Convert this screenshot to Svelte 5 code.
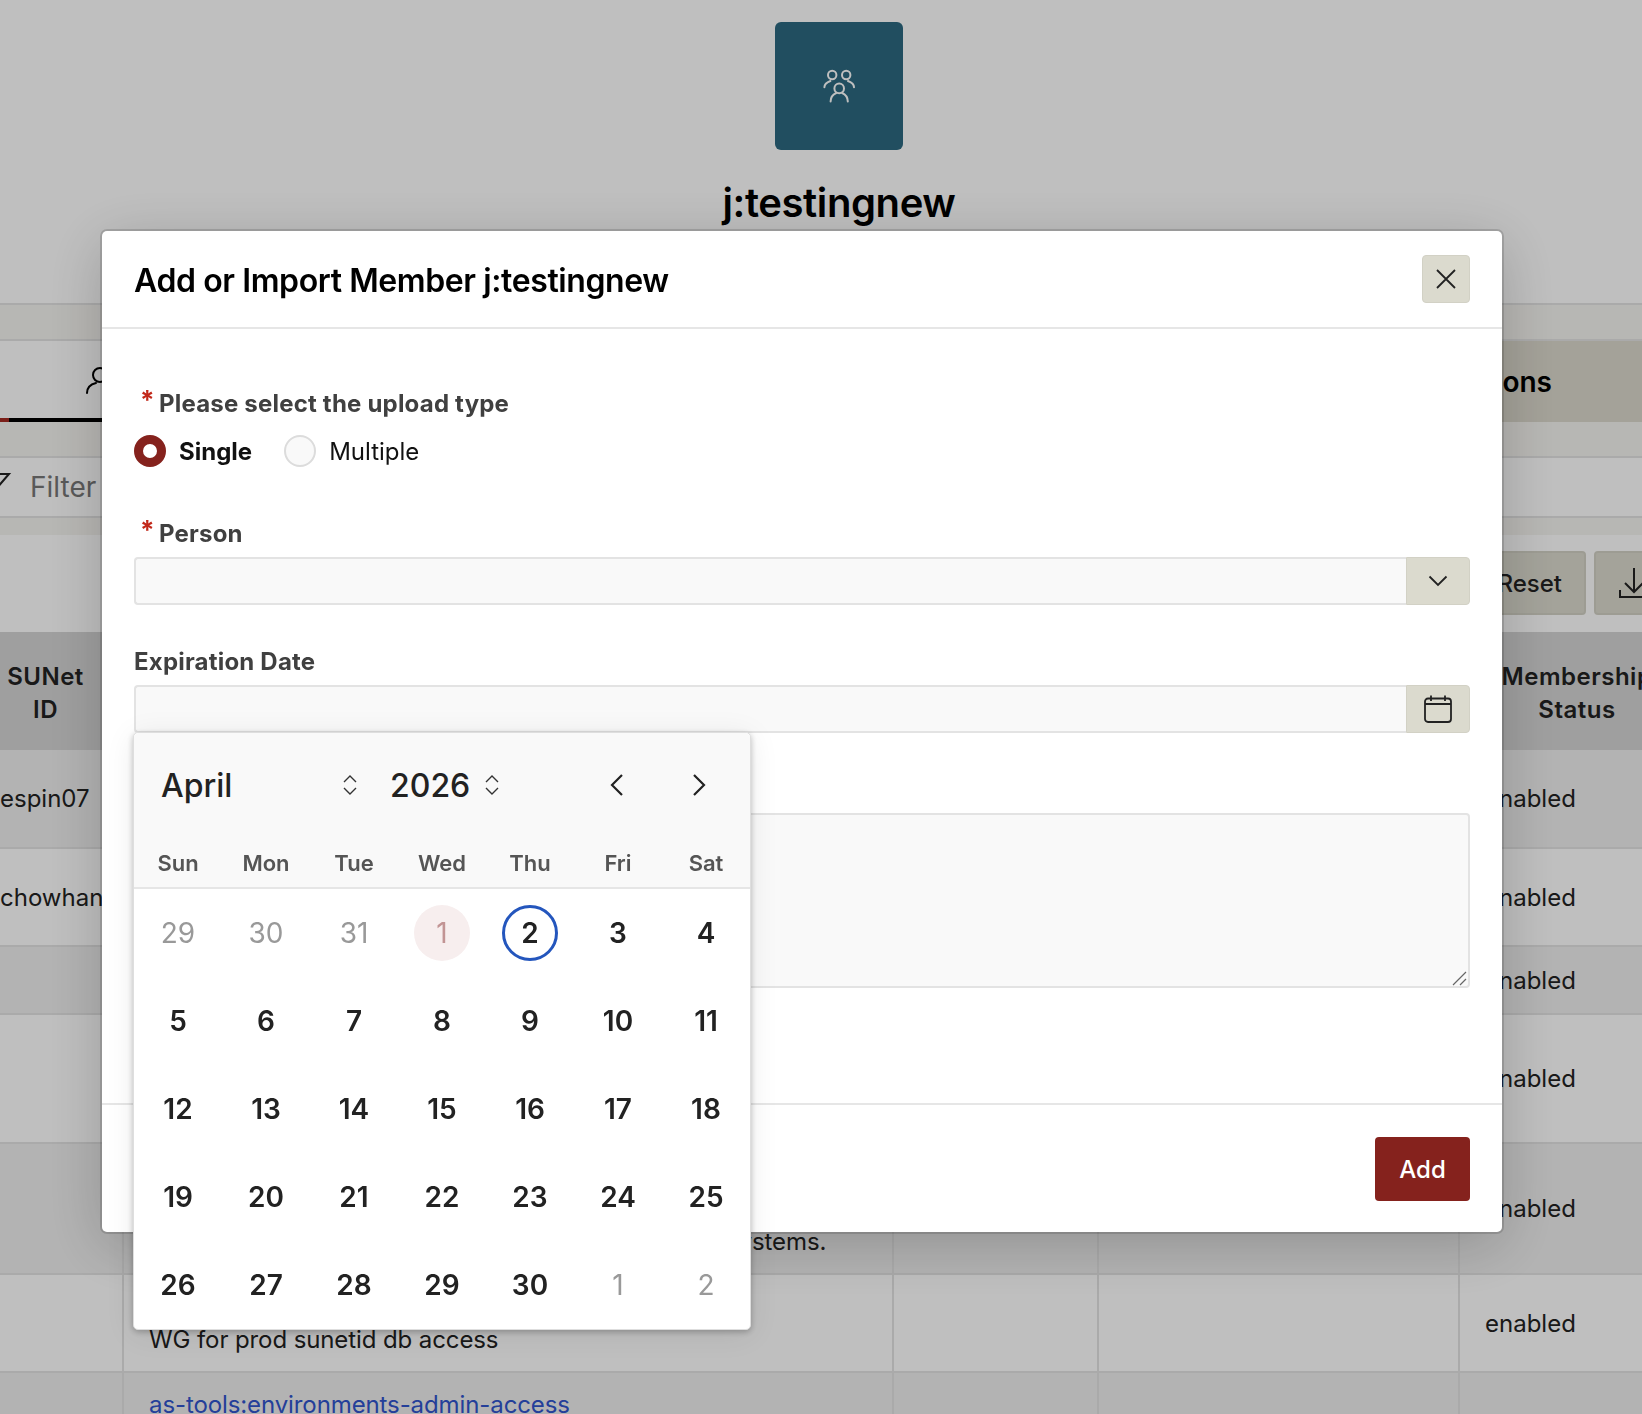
<script>
  const weekdays = ["Sun", "Mon", "Tue", "Wed", "Thu", "Fri", "Sat"];

  // April 2026 grid, with the trailing days of March and leading days of May
  const days = [];
  for (const d of [29, 30, 31]) days.push({ d, out: true });
  for (let d = 1; d <= 30; d++) days.push({ d, out: false });
  for (const d of [1, 2]) days.push({ d, out: true });

  const rows = [
    { h: 98, id: "espin07", lines: [] },
    { h: 98, id: "chowhan", lines: [] },
    { h: 68, id: "", lines: [] },
    { h: 129, id: "", lines: [] },
    { h: 131, id: "", lines: ["as-tools:administrators", "Workgroup for administrators", "Workgroup for administrators with full access to all systems."] },
    { h: 98, id: "", lines: ["as-tools:prod-db-access", "WG for prod sunetid db access"] },
    { h: 131, id: "", lines: ["as-tools:environments-admin-access", "WG for environment admins"] },
  ];
</script>

<div class="page">
  <header class="hero">
    <div class="avatar">
      <svg width="48" height="48" viewBox="0 0 48 48" fill="none" stroke="#fff" stroke-width="2" stroke-linecap="round">
        <circle cx="17.2" cy="13" r="4.2" />
        <circle cx="31.2" cy="13" r="4.2" />
        <circle cx="24.2" cy="26.4" r="4.8" />
        <path d="M9.4 25.2c0-3 2.8-5 6-6.2" />
        <path d="M39 25.2c0-3-2.8-5-6-6.2" />
        <path d="M15.6 39.6c0-4.4 3-7.4 5.6-8.6M32.8 39.6c0-4.4-3-7.4-5.6-8.6" />
      </svg>
    </div>
    <h1>j:testingnew</h1>
  </header>

  <div class="strip tabs-wrap">
    <nav class="tabs">
      <div class="tab active">
        <svg width="30" height="30" viewBox="0 0 30 30" fill="none" stroke="#000" stroke-width="2" stroke-linecap="round">
          <circle cx="15" cy="10" r="7" />
          <path d="M2 28c0-6 5-9 9-10" />
        </svg>
        <span>Members</span>
      </div>
      <div class="tab other"><span>Actions</span></div>
    </nav>
  </div>

  <div class="strip filter-wrap">
    <div class="filter">
      <svg width="24" height="30" viewBox="0 0 24 30" fill="none" stroke="#222" stroke-width="2">
        <path d="M-8 2H21L8 17V29" />
      </svg>
      <span>Filter</span>
    </div>
  </div>

  <div class="toolbar">
    <button class="tool">Reset</button>
    <button class="tool icon" aria-label="Download">
      <svg width="30" height="32" viewBox="0 0 30 32" fill="none" stroke="#222" stroke-width="2">
        <path d="M15 1V24M6 16l9 9 9-9M1 23v7H29" />
      </svg>
    </button>
  </div>

  <table class="grid">
    <colgroup>
      <col style="width:155px" />
      <col style="width:770px" />
      <col style="width:205px" />
      <col style="width:361px" />
      <col style="width:236px" />
    </colgroup>
    <thead>
      <tr>
        <th>SUNet<br />ID</th>
        <th>Group</th>
        <th>Start Date</th>
        <th>End Date</th>
        <th>Membership<br />Status</th>
      </tr>
    </thead>
    <tbody>
      {#each rows as r, i}
        <tr style="height:{r.h}px">
          <td class="sunet">{r.id}</td>
          <td class="group">
            {#each r.lines as line, n}
              <div class:link={n === 0}>{line}</div>
            {/each}
          </td>
          <td></td>
          <td></td>
          <td class="status">enabled</td>
        </tr>
      {/each}
    </tbody>
  </table>
</div>

<div class="backdrop"></div>

<div class="modal">
  <div class="modal-head">
    <h2>Add or Import Member j:testingnew</h2>
    <button class="close" aria-label="Close">
      <svg width="22" height="22" viewBox="0 0 22 22" fill="none" stroke="#222" stroke-width="1.8">
        <path d="M2 2L20 20M20 2L2 20" />
      </svg>
    </button>
  </div>

  <div class="modal-body">
    <div class="field radios-field">
      <div class="label"><span class="req">*</span>Please select the upload type</div>
      <div class="radios">
        <label class="radio on"><input type="radio" name="upload" checked /> Single</label>
        <label class="radio"><input type="radio" name="upload" /> Multiple</label>
      </div>
    </div>

    <div class="field">
      <div class="label"><span class="req">*</span>Person</div>
      <div class="combo">
        <input type="text" />
        <button class="addon" aria-label="Open list">
          <svg width="20" height="12" viewBox="0 0 20 12" fill="none" stroke="#222" stroke-width="1.8">
            <path d="M1.5 1.5L10 10L18.5 1.5" />
          </svg>
        </button>
      </div>
    </div>

    <div class="field date-field">
      <div class="label plain">Expiration Date</div>
      <div class="combo">
        <input type="text" />
        <button class="addon" aria-label="Open calendar">
          <svg width="30" height="30" viewBox="0 0 30 30" fill="none" stroke="#222" stroke-width="1.8">
            <rect x="2" y="4.5" width="26" height="23.5" rx="3" />
            <path d="M2 10H28M8 1.5V7M22 1.5V7" />
          </svg>
        </button>
      </div>

      <div class="calendar">
        <div class="cal-head">
          <div class="cal-top">
            <div class="sel month">
              <span>April</span>
              <svg width="16" height="22" viewBox="0 0 16 22" fill="none" stroke="#333" stroke-width="1.4">
                <path d="M2 8L8 2L14 8M2 14L8 20L14 14" />
              </svg>
            </div>
            <div class="sel year">
              <span>2026</span>
              <svg width="16" height="22" viewBox="0 0 16 22" fill="none" stroke="#333" stroke-width="1.4">
                <path d="M2 8L8 2L14 8M2 14L8 20L14 14" />
              </svg>
            </div>
            <div class="nav">
              <button aria-label="Previous month">
                <svg width="14" height="24" viewBox="0 0 14 24" fill="none" stroke="#222" stroke-width="2.2"><path d="M12 2L2 12L12 22" /></svg>
              </button>
              <button aria-label="Next month">
                <svg width="14" height="24" viewBox="0 0 14 24" fill="none" stroke="#222" stroke-width="2.2"><path d="M2 2L12 12L2 22" /></svg>
              </button>
            </div>
          </div>
          <div class="weekdays">
            {#each weekdays as w}
              <span>{w}</span>
            {/each}
          </div>
        </div>
        <div class="days">
          {#each days as day}
            <div class="day" class:out={day.out}>
              <span class:first={!day.out && day.d === 1} class:today={!day.out && day.d === 2}>{day.d}</span>
            </div>
          {/each}
        </div>
      </div>
    </div>

    <div class="field">
      <div class="label plain">Reason</div>
      <div class="area">
        <textarea></textarea>
        <svg class="grip" width="15" height="15" viewBox="0 0 15 15" fill="none" stroke="#666" stroke-width="1.2">
          <path d="M1 14L14 1M8 14L14 8" />
        </svg>
      </div>
    </div>
  </div>

  <div class="modal-foot">
    <button class="primary">Add</button>
  </div>
</div>

<style>
  :global(html), :global(body) {
    height: 100%;
    overflow: hidden;
  }

  :global(body) {
    font-family: Inter, "Noto Sans", sans-serif;
    color: #222;
    background: #fff;
  }

  button {
    font-family: inherit;
    cursor: pointer;
  }

  .page {
    height: 100vh;
    overflow: hidden;
    background: #fff;
  }

  .hero {
    height: 305px;
    box-sizing: border-box;
    padding: 22px 0 0 36px;
    border-bottom: 2px solid #e3e3e3;
    display: flex;
    flex-direction: column;
    align-items: center;
  }

  .avatar {
    width: 128px;
    height: 128px;
    border-radius: 6px;
    background: #2d6980;
    display: flex;
    align-items: center;
    justify-content: center;
  }

  h1 {
    margin: 29px 0 0;
    font-size: 40px;
    line-height: 48px;
    font-weight: 600;
    color: #000;
    letter-spacing: -0.4px;
  }

  .strip {
    background: #f5f4f0;
  }

  .tabs-wrap {
    padding: 34px 0;
    height: 83px;
  }

  .tabs {
    display: flex;
    height: 83px;
    background: #fff;
    border-top: 2px solid #e3e3e3;
    box-sizing: border-box;
  }

  .tab {
    flex: 1;
    display: flex;
    align-items: center;
    box-sizing: border-box;
  }

  .tab.active {
    padding-left: 85px;
    gap: 12px;
    font-size: 28px;
    border-bottom: 4px solid #000;
    position: relative;
  }

  .tab.active::after {
    content: "";
    position: absolute;
    left: 0;
    bottom: -4px;
    width: 9px;
    height: 4px;
    background: #a32a22;
  }

  .tab.other {
    background: #dbd8cc;
    justify-content: flex-end;
    padding-right: 90px;
    font-size: 28px;
    font-weight: 600;
    color: #000;
  }

  .filter-wrap {
    padding-bottom: 17px;
  }

  .filter {
    height: 62px;
    box-sizing: border-box;
    background: #fff;
    border-top: 2px solid #e3e3e3;
    border-bottom: 2px solid #e3e3e3;
    display: flex;
    align-items: center;
    gap: 18px;
    font-size: 28px;
    color: #777;
  }

  .filter svg {
    margin-left: -12px;
  }

  .toolbar {
    height: 97px;
    box-sizing: border-box;
    display: flex;
    justify-content: flex-end;
    align-items: flex-start;
    gap: 8px;
    padding-top: 16px;
    margin-right: -32px;
  }

  .tool {
    height: 64px;
    padding: 0 22px 0 25px;
    border: 2px solid #d2d1c5;
    border-radius: 4px;
    background: #dbdace;
    font-size: 24px;
    font-weight: 500;
    color: #222;
  }

  .tool.icon {
    width: 80px;
    padding: 0;
    display: flex;
    align-items: center;
    justify-content: center;
  }

  .grid {
    border-collapse: collapse;
    table-layout: fixed;
    width: 1727px;
    margin-left: -33px;
    font-size: 24px;
    line-height: 33px;
    color: #222;
  }

  th {
    height: 115px;
    padding: 3px 0 0;
    background: #d5d5d5;
    font-weight: 600;
    text-align: center;
    letter-spacing: 0.5px;
    color: #222;
  }

  td {
    border: 2px solid #e3e3e3;
    border-top: 0;
    padding: 0;
    vertical-align: middle;
  }

  tbody tr:nth-child(odd) td {
    background: #efefef;
  }

  .sunet {
    padding-left: 31px;
    white-space: nowrap;
  }

  .group {
    padding-left: 25px;
    white-space: nowrap;
    vertical-align: top;
    padding-top: 15px;
    letter-spacing: -0.1px;
  }

  .link {
    color: #3054cd;
  }

  .status {
    padding-left: 25px;
  }

  tbody tr:last-child .status {
    vertical-align: middle;
  }

  .backdrop {
    position: fixed;
    inset: 0;
    background: rgba(0, 0, 0, 0.25);
  }

  .modal {
    position: fixed;
    top: 231px;
    left: 102px;
    width: 1400px;
    background: #fff;
    border-radius: 5px;
    box-shadow: 0 0 0 2px rgba(0, 0, 0, 0.14), 0 12px 60px rgba(0, 0, 0, 0.2);
  }

  .modal-head {
    height: 98px;
    box-sizing: border-box;
    border-bottom: 2px solid #e6e6e6;
    display: flex;
    align-items: center;
    justify-content: space-between;
    padding: 0 32px;
  }

  h2 {
    margin: 2px 0 0;
    font-size: 32px;
    font-weight: 600;
    color: #000;
    letter-spacing: -0.4px;
  }

  .close {
    width: 48px;
    height: 48px;
    padding: 0;
    border: 1px solid #d2d1c5;
    border-radius: 4px;
    background: #dbdace;
    display: flex;
    align-items: center;
    justify-content: center;
  }

  .modal-body {
    padding: 59px 32px 115px;
    display: flex;
    flex-direction: column;
    gap: 42px;
  }

  .field {
    position: relative;
  }

  .label {
    font-size: 24px;
    line-height: 30px;
    font-weight: 700;
    color: #404040;
    margin-bottom: 8px;
    padding-left: 6px;
    letter-spacing: 0.2px;
  }

  .label.plain {
    padding-left: 0;
  }

  .req {
    display: inline-block;
    width: 19px;
    color: #c2281a;
    font-size: 26px;
    font-weight: 700;
    position: relative;
    top: -3px;
  }

  .radios-field .label {
    margin-bottom: 16px;
  }

  .radios-field {
    padding-bottom: 9px;
  }

  .radios {
    display: flex;
    gap: 32px;
    height: 32px;
  }

  .radio {
    display: flex;
    align-items: center;
    gap: 13px;
    font-size: 24px;
    color: #111;
  }

  .radio.on {
    font-weight: 700;
  }

  .radio input {
    appearance: none;
    width: 32px;
    height: 32px;
    margin: 0;
    box-sizing: border-box;
    border-radius: 50%;
    border: 2px solid #dcdcdc;
    background: #f9f9f9;
  }

  .radio input:checked {
    border: 9px solid #85221d;
    background: #fff;
  }

  .combo {
    display: flex;
    height: 48px;
  }

  .combo input {
    flex: 1;
    min-width: 0;
    box-sizing: border-box;
    background: #f9f9f9;
    border: 2px solid #e3e3e3;
    border-right: 0;
    border-radius: 4px 0 0 4px;
    outline: none;
  }

  .addon {
    width: 64px;
    padding: 0;
    border: 1px solid #d2d1c5;
    border-radius: 0 4px 4px 0;
    background: #dbdace;
    display: flex;
    align-items: center;
    justify-content: center;
  }

  .area {
    position: relative;
  }

  textarea {
    display: block;
    width: 100%;
    height: 175px;
    box-sizing: border-box;
    background: #f9f9f9;
    border: 2px solid #e3e3e3;
    border-radius: 4px;
    outline: none;
    resize: none;
  }

  .grip {
    position: absolute;
    right: 3px;
    bottom: 2px;
  }

  .calendar {
    position: absolute;
    left: -1px;
    top: calc(100% - 1px);
    width: 618px;
    box-sizing: border-box;
    border: 1px solid #dedede;
    border-radius: 5px;
    background: #fff;
    box-shadow: 0 2px 6px rgba(0, 0, 0, 0.25), 0 4px 30px rgba(0, 0, 0, 0.08);
    z-index: 2;
  }

  .cal-head {
    background: #f9f9f9;
    border-bottom: 2px solid #e6e6e6;
    border-radius: 5px 5px 0 0;
    height: 156px;
    box-sizing: border-box;
    padding-top: 21px;
  }

  .cal-top {
    display: flex;
    align-items: center;
    height: 62px;
    padding-left: 27px;
  }

  .sel {
    display: flex;
    align-items: center;
    justify-content: space-between;
    font-size: 32px;
    font-weight: 500;
    color: #222;
  }

  .month {
    width: 197px;
  }

  .year {
    width: 110px;
    margin-left: 32px;
  }

  .nav {
    margin-left: auto;
    padding-right: 10px;
    display: flex;
  }

  .nav button {
    width: 82px;
    height: 48px;
    padding: 0;
    border: 0;
    background: none;
    display: flex;
    align-items: center;
    justify-content: center;
  }

  .weekdays {
    display: grid;
    grid-template-columns: repeat(7, 88px);
    height: 46px;
    margin-top: 24px;
    align-items: center;
    text-align: center;
    font-size: 22px;
    font-weight: 600;
    color: #555;
  }

  .days {
    display: grid;
    grid-template-columns: repeat(7, 88px);
    grid-auto-rows: 88px;
  }

  .day {
    display: flex;
    align-items: center;
    justify-content: center;
    font-size: 28px;
    font-weight: 600;
    color: #222;
  }

  .day.out {
    font-weight: 400;
    color: #999;
  }

  .day span {
    width: 56px;
    height: 56px;
    box-sizing: border-box;
    border-radius: 50%;
    display: flex;
    align-items: center;
    justify-content: center;
  }

  .day .first {
    background: #f7eeee;
    color: #c29494;
    font-weight: 400;
  }

  .day .today {
    border: 3px solid #2456bd;
  }

  .modal-foot {
    border-top: 2px solid #e6e6e6;
    padding: 32px 32px 31px;
    display: flex;
    justify-content: flex-end;
  }

  .primary {
    width: 95px;
    height: 64px;
    border: 0;
    border-radius: 4px;
    background: #85221d;
    color: #fff;
    font-size: 24px;
    font-weight: 500;
  }
</style>
